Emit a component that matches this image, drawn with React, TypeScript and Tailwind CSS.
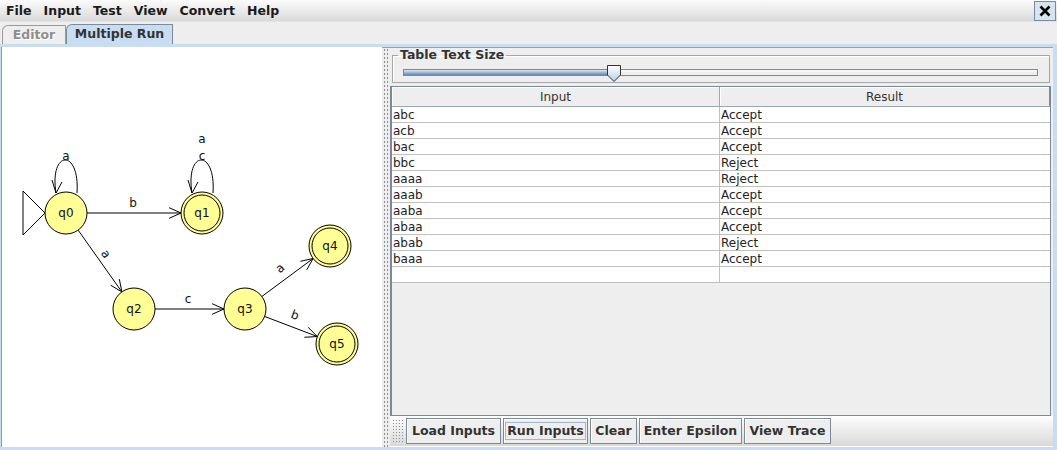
const menus = ["File", "Input", "Test", "View", "Convert", "Help"];

const results: [string, string][] = [
  ["abc", "Accept"],
  ["acb", "Accept"],
  ["bac", "Accept"],
  ["bbc", "Reject"],
  ["aaaa", "Reject"],
  ["aaab", "Accept"],
  ["aaba", "Accept"],
  ["abaa", "Accept"],
  ["abab", "Reject"],
  ["baaa", "Accept"],
  ["", ""],
];

const buttons = [
  { label: "Load Inputs", w: "w-[95px]" },
  { label: "Run Inputs", w: "w-[85px]", focus: true },
  { label: "Clear", w: "w-[47px]" },
  { label: "Enter Epsilon", w: "w-[103px]" },
  { label: "View Trace", w: "w-[87px]" },
];

type State = { id: string; x: number; y: number; final?: boolean };

const states: State[] = [
  { id: "q0", x: 66, y: 213 },
  { id: "q1", x: 202, y: 213, final: true },
  { id: "q2", x: 134, y: 309 },
  { id: "q3", x: 245, y: 309 },
  { id: "q4", x: 330, y: 246, final: true },
  { id: "q5", x: 337, y: 344, final: true },
];

function Arrow({ x1, y1, x2, y2 }: { x1: number; y1: number; x2: number; y2: number }) {
  const a = Math.atan2(y2 - y1, x2 - x1);
  const len = 13;
  const spread = 0.42;
  const p1 = [x2 - len * Math.cos(a - spread), y2 - len * Math.sin(a - spread)];
  const p2 = [x2 - len * Math.cos(a + spread), y2 - len * Math.sin(a + spread)];
  return (
    <g stroke="black" strokeWidth="1" fill="none">
      <line x1={x1} y1={y1} x2={x2} y2={y2} />
      <polyline points={`${p1[0]},${p1[1]} ${x2},${y2} ${p2[0]},${p2[1]}`} />
    </g>
  );
}

function Edge({ from, to }: { from: State; to: State }) {
  const dx = to.x - from.x;
  const dy = to.y - from.y;
  const d = Math.hypot(dx, dy);
  const ux = dx / d;
  const uy = dy / d;
  return <Arrow x1={from.x + ux * 21} y1={from.y + uy * 21} x2={to.x - ux * 21} y2={to.y - uy * 21} />;
}

function Loop({ cx }: { cx: number }) {
  return (
    <g stroke="black" strokeWidth="1" fill="none">
      <path d={`M ${cx + 11} 193 C ${cx + 14} 148, ${cx - 17} 150, ${cx - 10} 193`} />
      <polyline points={`${cx - 14},180 ${cx - 10},193 ${cx - 4},182`} />
    </g>
  );
}

function Label({ x, y, t, r = 0 }: { x: number; y: number; t: string; r?: number }) {
  return (
    <text
      x={x}
      y={y + 4}
      textAnchor="middle"
      fontSize="12"
      fontFamily="'DejaVu Sans', sans-serif"
      fill="#111"
      transform={r ? `rotate(${r} ${x} ${y})` : undefined}
    >
      {t}
    </text>
  );
}

function Diagram() {
  const s = Object.fromEntries(states.map((q) => [q.id, q]));
  return (
    <svg width="380" height="400" viewBox="2 47 380 400">
      {/* initial marker */}
      <polygon points="23,191 45,213 23,235" fill="white" stroke="black" />
      <Loop cx={66} />
      <Loop cx={202} />
      <Edge from={s.q0} to={s.q1} />
      <Edge from={s.q0} to={s.q2} />
      <Edge from={s.q2} to={s.q3} />
      <Edge from={s.q3} to={s.q4} />
      <Edge from={s.q3} to={s.q5} />
      {states.map((q) => (
        <g key={q.id}>
          <circle cx={q.x} cy={q.y} r="21" fill="#ffff96" stroke="black" />
          {q.final && <circle cx={q.x} cy={q.y} r="18" fill="none" stroke="black" />}
          <Label x={q.x} y={q.y} t={q.id} />
        </g>
      ))}
      <Label x={66} y={156} t="a" />
      <Label x={202} y={139} t="a" />
      <Label x={202} y={156} t="c" />
      <Label x={133} y={203} t="b" />
      <Label x={106} y={254} t="a" r={54.7} />
      <Label x={188} y={299} t="c" />
      <Label x={280} y={268} t="a" r={-36.5} />
      <Label x={295} y={315} t="b" r={20.8} />
    </svg>
  );
}

function Slider() {
  return (
    <svg width="656" height="20" viewBox="0 0 656 20">
      <defs>
        <linearGradient id="fill" x1="0" y1="0" x2="0" y2="1">
          <stop offset="0" stopColor="#dce7f3" />
          <stop offset="0.5" stopColor="#a3b8cc" />
          <stop offset="1" stopColor="#6382bf" />
        </linearGradient>
        <linearGradient id="thumb" x1="0" y1="0" x2="0" y2="1">
          <stop offset="0" stopColor="#ffffff" />
          <stop offset="1" stopColor="#b8cfe5" />
        </linearGradient>
      </defs>
      <rect x="10.5" y="7.5" width="634" height="6" fill="#eeeeee" stroke="#7a8a99" />
      <rect x="11.5" y="8.5" width="632" height="1" fill="#ffffff" />
      <rect x="11" y="8" width="205" height="5" fill="url(#fill)" />
      <path d="M 214.5 3.5 H 227.5 V 13 L 221 19.5 L 214.5 13 Z" fill="url(#thumb)" stroke="#333" />
    </svg>
  );
}

export default function App() {
  return (
    <div className="w-[1057px] h-[450px] flex flex-col bg-[#eeeeee] font-['DejaVu_Sans',sans-serif] text-[12px] text-[#333333] overflow-hidden">
      {/* Menu bar */}
      <div className="h-[22px] flex items-center bg-linear-to-b from-[#fbfbfb] to-[#dadada] border-b border-[#e4e4e4]">
        {menus.map((m) => (
          <span key={m} className="px-[6px] font-bold text-[12.5px] leading-[20px] text-[#1a1a1a]">
            {m}
          </span>
        ))}
        <div className="ml-auto mr-[1px] w-[22px] h-[20px] flex items-center justify-center bg-[#d6e3f0] border border-[#7a8a99]">
          <svg width="12" height="12" viewBox="0 0 12 12">
            <path d="M 1.5 1.5 L 10.5 10.5 M 10.5 1.5 L 1.5 10.5" stroke="black" strokeWidth="2.6" />
          </svg>
        </div>
      </div>

      {/* Tabs */}
      <div className="h-[22px] flex items-end pl-[2px]">
        <div className="h-[19px] w-[64px] flex items-center justify-center border border-b-0 border-[#9a9a9a] rounded-tl-[6px] bg-[#eeeeee] font-bold text-[12.5px] text-[#8e8e8e] [text-shadow:1px_1px_0_#ffffff]">
          Editor
        </div>
        <div className="h-[20px] w-[107px] flex items-center justify-center border border-b-0 border-[#7a8a99] rounded-tl-[6px] bg-[#c8ddf2] font-bold text-[12.5px] text-[#333333]">
          Multiple Run
        </div>
      </div>

      {/* Tab content */}
      <div className="flex-1 min-h-0 flex border-t-[3px] border-l border-r-[4px] border-b-[3px] border-[#c8ddf2] shadow-[inset_0_1px_0_#8fa4c1]">
        <div className="w-[381px] bg-white border-l border-[#8a9bb0]">
          <Diagram />
        </div>

        <div className="w-[8px] bg-[radial-gradient(circle,#8c8c8c_0.7px,transparent_1px)] bg-[length:3px_4px] bg-[position:1px_1px]" />

        <div className="flex-1 flex flex-col">
          <fieldset className="mt-[1px] ml-[2px] mr-[3px] h-[35px] border border-[#a6a6a6] shadow-[inset_1px_1px_0_#ffffff] px-0">
            <legend className="ml-[5px] px-[2px] font-bold text-[12.5px] leading-[14px] text-[#333333]">
              Table Text Size
            </legend>
            <Slider />
          </fieldset>

          <div className="mt-[3px] mr-[2px] h-[330px] flex flex-col border border-l-2 border-[#7a8a99] bg-[#eeeeee]">
            <div className="h-[20px] grid grid-cols-[328px_1fr] border-b border-[#9aa8b5]">
              <div className="flex items-center justify-center border-r border-[#9aa8b5] shadow-[inset_1px_1px_0_#ffffff]">
                Input
              </div>
              <div className="flex items-center justify-center border-r border-[#7a8a99] shadow-[inset_1px_1px_0_#ffffff]">
                Result
              </div>
            </div>
            {results.map(([inp, res], i) => (
              <div key={i} className="h-[16px] grid grid-cols-[328px_1fr] bg-white border-b border-[#c0c0c0] leading-[16px]">
                <div className="pl-[1px] border-r border-[#c0c0c0] text-[#222]">{inp}</div>
                <div className="pl-[1px] text-[#222]">{res}</div>
              </div>
            ))}
          </div>

          <div className="flex-1 flex items-center bg-linear-to-b from-[#ffffff] to-[#d8d8d8] border-b border-white">
            <div className="ml-[2px] w-[11px] h-[24px] bg-[radial-gradient(circle,#8c8c8c_0.7px,transparent_1px)] bg-[length:3px_3px]" />
            <div className="ml-[3px] flex gap-[2px]">
              {buttons.map((b) => (
                <div
                  key={b.label}
                  className={`${b.w} h-[26px] flex items-center justify-center border border-[#7a8a99] bg-[#eeeeee] shadow-[inset_1px_1px_0_#ffffff] font-bold text-[12.5px] text-[#333333]`}
                >
                  {b.focus ? (
                    <span className="px-[1px] h-[18px] leading-[16px] border border-[#a3b8cc]">{b.label}</span>
                  ) : (
                    b.label
                  )}
                </div>
              ))}
            </div>
          </div>
        </div>
      </div>
    </div>
  );
}
